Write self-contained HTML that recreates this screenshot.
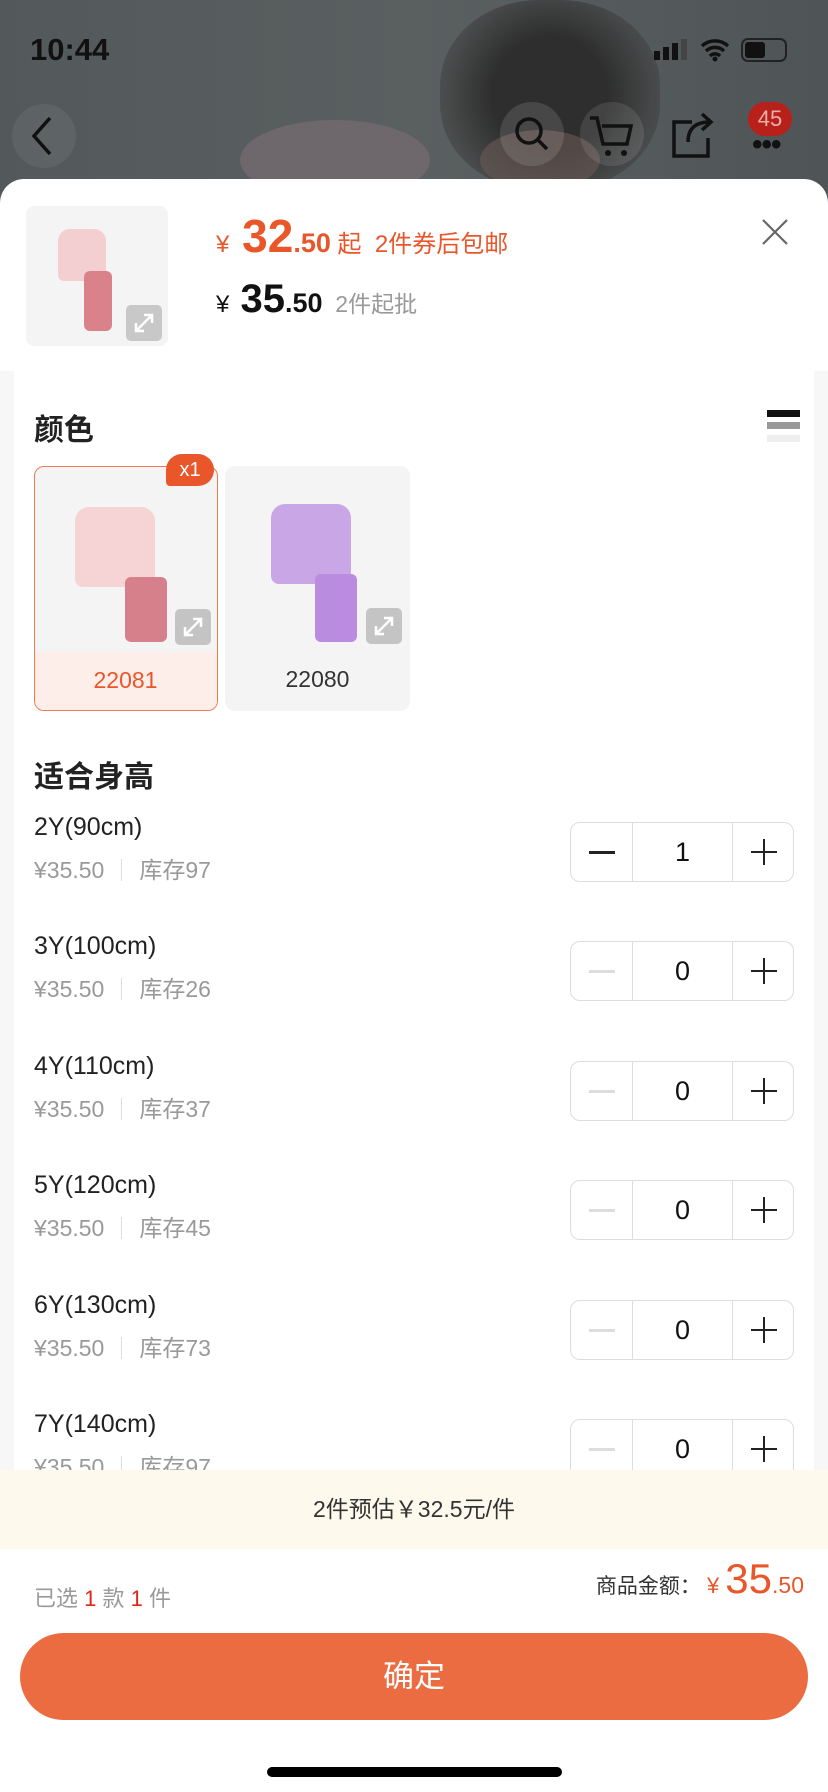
<!DOCTYPE html>
<html><head><meta charset="utf-8">
<style>
*{margin:0;padding:0;box-sizing:border-box}
body{width:828px;height:1792px;overflow:hidden;position:relative;font-family:"Liberation Sans","Noto Sans CJK SC",sans-serif;background:#4e5355}
.abs{position:absolute}
.bg{left:0;top:0;width:828px;height:200px;background:linear-gradient(90deg,#53595b,#5a5f60 50%,#4f5557)}
.sheet{left:0;top:179px;width:828px;height:1613px;background:#fff;border-radius:24px 24px 0 0;overflow:hidden}
.sidebg{left:0;top:160px;width:828px;height:1140px;background:#f7f7f7}
.row{position:absolute;left:34px;width:760px}
.sz{font-size:25px;color:#222;position:absolute;left:0;top:0}
.pr{font-size:23px;color:#999;position:absolute;left:0;top:38px}
.pr i{display:inline-block;width:1px;height:22px;background:#ddd;margin:0 17px;vertical-align:-3px}
.step{position:absolute;left:536px;top:9px;width:224px;height:60px;border:1px solid #ddd;border-radius:10px}
.step .d1{position:absolute;left:61px;top:0;width:1px;height:58px;background:#ddd}
.step .d2{position:absolute;left:161px;top:0;width:1px;height:58px;background:#ddd}
.step .n{position:absolute;left:62px;width:99px;top:0;line-height:58px;text-align:center;font-size:27px;color:#111}
.step .m{position:absolute;left:18px;top:28px;width:26px;height:3px;background:#ddd}
.step .m.on{background:#222}
.step .p1{position:absolute;left:180px;top:28px;width:26px;height:2px;background:#222}
.step .p2{position:absolute;left:192px;top:16px;width:2px;height:26px;background:#222}
</style></head><body>
<div class="abs bg"></div>
<div class="abs" style="left:440px;top:0;width:220px;height:190px;border-radius:45%;background:radial-gradient(circle,#2e2e2e 40%,rgba(60,60,60,.6) 70%,rgba(80,85,87,0) 100%)"></div>
<div class="abs" style="left:480px;top:130px;width:120px;height:60px;border-radius:50%;background:#6a5a55;opacity:.6"></div>
<div class="abs" style="left:240px;top:120px;width:190px;height:80px;border-radius:50%;background:#6e686d"></div>
<div class="abs" style="left:30px;top:32px;font-size:31px;font-weight:bold;color:#111">10:44</div>
<div class="abs" style="left:654px;top:51px;width:6px;height:9px;background:#111"></div>
<div class="abs" style="left:663px;top:47px;width:6px;height:13px;background:#111"></div>
<div class="abs" style="left:672px;top:43px;width:6px;height:17px;background:#111"></div>
<div class="abs" style="left:681px;top:39px;width:6px;height:21px;background:#444"></div>
<svg class="abs" style="left:700px;top:38px" width="30" height="24" viewBox="0 0 30 24"><path d="M2 8a19 19 0 0 1 26 0M6 13a13 13 0 0 1 18 0M10 18a7 7 0 0 1 10 0" stroke="#111" stroke-width="3.5" fill="none"/><circle cx="15" cy="21" r="2.5" fill="#111"/></svg>
<div class="abs" style="left:741px;top:38px;width:46px;height:24px;border:2px solid #222;border-radius:7px"></div>
<div class="abs" style="left:745px;top:42px;width:20px;height:16px;background:#111;border-radius:3px"></div>
<div class="abs" style="left:12px;top:104px;width:64px;height:64px;border-radius:50%;background:rgba(255,255,255,.06)"></div>
<svg class="abs" style="left:30px;top:114px" width="24" height="44"><path d="M20 4L4 22l16 18" stroke="#111" stroke-width="3.5" fill="none"/></svg>
<div class="abs" style="left:500px;top:102px;width:64px;height:64px;border-radius:50%;background:rgba(255,255,255,.12)"></div>
<svg class="abs" style="left:512px;top:114px" width="40" height="40"><circle cx="17" cy="17" r="12" stroke="#111" stroke-width="3.5" fill="none"/><path d="M26 26l9 9" stroke="#111" stroke-width="3.5"/></svg>
<div class="abs" style="left:580px;top:102px;width:64px;height:64px;border-radius:50%;background:rgba(255,255,255,.1)"></div>
<svg class="abs" style="left:588px;top:112px" width="50" height="50"><path d="M2 6h7l6 26h24l4-18H14" stroke="#111" stroke-width="3.5" fill="none"/><circle cx="20" cy="41" r="3" fill="#111"/><circle cx="36" cy="41" r="3" fill="#111"/></svg>
<svg class="abs" style="left:670px;top:110px" width="46" height="50"><path d="M22 12H4v34h34V28M18 32c0-14 8-20 22-20M32 4l9 8-9 8" stroke="#111" stroke-width="3.5" fill="none"/></svg>
<div class="abs" style="left:752px;top:128px;font-size:30px;font-weight:bold;color:#111;letter-spacing:-1px">•••</div>
<div class="abs" style="left:748px;top:102px;width:44px;height:34px;border-radius:17px;background:#b8201a;color:#e9b0a8;font-size:22px;text-align:center;line-height:34px">45</div>

<div class="abs sheet">
  <div class="abs sidebg" style="top:192px"></div>
  <div class="abs" style="left:14px;top:192px;width:800px;height:1300px;background:#fff"></div>
  <div class="abs" style="left:26px;top:27px;width:142px;height:140px;background:#f4f4f4;border-radius:8px"></div>
  <div class="abs" style="left:58px;top:50px;width:48px;height:52px;background:#f4cfd1;border-radius:12px 12px 6px 6px"></div>
  <div class="abs" style="left:84px;top:92px;width:28px;height:60px;background:#d9828a;border-radius:6px"></div>
  <div class="abs" style="left:126px;top:126px;width:36px;height:36px;background:#c8c8c8;border-radius:5px"></div>
  <svg class="abs" style="left:130px;top:130px" width="28" height="28"><path d="M6 22L22 6M14 6h8v8M6 14v8h8" stroke="#fff" stroke-width="2.5" fill="none"/></svg>
  <div class="abs" style="left:216px;top:30px;color:#e8562a;white-space:nowrap"><span style="font-size:24px">¥</span><span style="font-size:46px;font-weight:bold"> 32</span><span style="font-size:27px;font-weight:bold">.50</span><span style="font-size:24px"> 起&nbsp;&nbsp;2件券后包邮</span></div>
  <div class="abs" style="left:216px;top:98px;color:#111;white-space:nowrap"><span style="font-size:24px">¥</span><span style="font-size:40px;font-weight:bold"> 35</span><span style="font-size:27px;font-weight:bold">.50</span><span style="font-size:23px;color:#999">&nbsp; 2件起批</span></div>
  <svg class="abs" style="left:760px;top:38px" width="30" height="30"><path d="M3 3l24 24M27 3L3 27" stroke="#666" stroke-width="2.2"/></svg>

  <div class="abs" style="left:34px;top:226px;font-size:30px;font-weight:bold;color:#222">颜色</div>
  <div class="abs" style="left:767px;top:231px;width:33px;height:7px;background:#111"></div>
  <div class="abs" style="left:767px;top:243px;width:33px;height:7px;background:#999"></div>
  <div class="abs" style="left:767px;top:256px;width:33px;height:7px;background:#eee"></div>

  <div class="abs" style="left:34px;top:287px;width:184px;height:245px;border:1.5px solid #ee7b53;border-radius:10px;overflow:hidden;background:#f4f4f4">
    <div class="abs" style="left:0;top:185px;width:184px;height:60px;background:#fdeee9"></div>
    <div class="abs" style="left:0;top:200px;width:181px;text-align:center;font-size:23px;color:#e8562a">22081</div>
    <div class="abs" style="left:40px;top:40px;width:80px;height:80px;background:#f6d3d5;border-radius:14px 14px 8px 8px"></div>
    <div class="abs" style="left:90px;top:110px;width:42px;height:65px;background:#d5808a;border-radius:6px"></div>
    <div class="abs" style="left:140px;top:142px;width:36px;height:36px;background:#c4c4c4;border-radius:5px"></div>
    <svg class="abs" style="left:144px;top:146px" width="28" height="28"><path d="M6 22L22 6M14 6h8v8M6 14v8h8" stroke="#fff" stroke-width="2.5" fill="none"/></svg>
  </div>
  <div class="abs" style="left:166px;top:275px;width:48px;height:32px;border-radius:16px 16px 16px 4px;background:#e8562a;color:#fff;font-size:20px;text-align:center;line-height:32px">x1</div>
  <div class="abs" style="left:225px;top:287px;width:185px;height:245px;border-radius:10px;overflow:hidden;background:#f4f4f4">
    <div class="abs" style="left:0;top:200px;width:185px;text-align:center;font-size:23px;color:#333">22080</div>
    <div class="abs" style="left:46px;top:38px;width:80px;height:80px;background:#c9a6e6;border-radius:14px 14px 8px 8px"></div>
    <div class="abs" style="left:90px;top:108px;width:42px;height:68px;background:#b98ce0;border-radius:6px"></div>
    <div class="abs" style="left:141px;top:142px;width:36px;height:36px;background:#c4c4c4;border-radius:5px"></div>
    <svg class="abs" style="left:145px;top:146px" width="28" height="28"><path d="M6 22L22 6M14 6h8v8M6 14v8h8" stroke="#fff" stroke-width="2.5" fill="none"/></svg>
  </div>

  <div class="abs" style="left:34px;top:573px;font-size:30px;font-weight:bold;color:#222">适合身高</div>

  <div class="row" style="top:634px"><div class="sz">2Y(90cm)</div><div class="pr">¥35.50<i></i>库存97</div><div class="step"><div class="d1"></div><div class="d2"></div><div class="m on"></div><div class="n">1</div><div class="p1"></div><div class="p2"></div></div></div>
  <div class="row" style="top:753px"><div class="sz">3Y(100cm)</div><div class="pr">¥35.50<i></i>库存26</div><div class="step"><div class="d1"></div><div class="d2"></div><div class="m"></div><div class="n">0</div><div class="p1"></div><div class="p2"></div></div></div>
  <div class="row" style="top:873px"><div class="sz">4Y(110cm)</div><div class="pr">¥35.50<i></i>库存37</div><div class="step"><div class="d1"></div><div class="d2"></div><div class="m"></div><div class="n">0</div><div class="p1"></div><div class="p2"></div></div></div>
  <div class="row" style="top:992px"><div class="sz">5Y(120cm)</div><div class="pr">¥35.50<i></i>库存45</div><div class="step"><div class="d1"></div><div class="d2"></div><div class="m"></div><div class="n">0</div><div class="p1"></div><div class="p2"></div></div></div>
  <div class="row" style="top:1112px"><div class="sz">6Y(130cm)</div><div class="pr">¥35.50<i></i>库存73</div><div class="step"><div class="d1"></div><div class="d2"></div><div class="m"></div><div class="n">0</div><div class="p1"></div><div class="p2"></div></div></div>
  <div class="row" style="top:1231px"><div class="sz">7Y(140cm)</div><div class="pr">¥35.50<i></i>库存97</div><div class="step"><div class="d1"></div><div class="d2"></div><div class="m"></div><div class="n">0</div><div class="p1"></div><div class="p2"></div></div></div>

  <div class="abs" style="left:0;top:1291px;width:828px;height:322px;background:#fff"></div>
  <div class="abs" style="left:0;top:1291px;width:828px;height:79px;background:#fdf9ec;text-align:center;line-height:79px;font-size:23px;color:#333">2件预估￥32.5元/件</div>
  <div class="abs" style="left:34px;top:1402px;font-size:22px;color:#999">已选 <span style="color:#e0251b">1</span> 款 <span style="color:#e0251b">1</span> 件</div>
  <div class="abs" style="right:24px;top:1376px;white-space:nowrap;color:#e8562a"><span style="font-size:21px;color:#333">商品金额：</span><span style="font-size:22px"> ¥ </span><span style="font-size:42px">35</span><span style="font-size:23px">.50</span></div>
  <div class="abs" style="left:20px;top:1454px;width:788px;height:87px;border-radius:44px;background:#ec6c42;color:#fff;font-size:31px;text-align:center;line-height:87px">确定</div>
  <div class="abs" style="left:267px;top:1588px;width:295px;height:10px;border-radius:5px;background:#000"></div>
</div>
</body></html>
